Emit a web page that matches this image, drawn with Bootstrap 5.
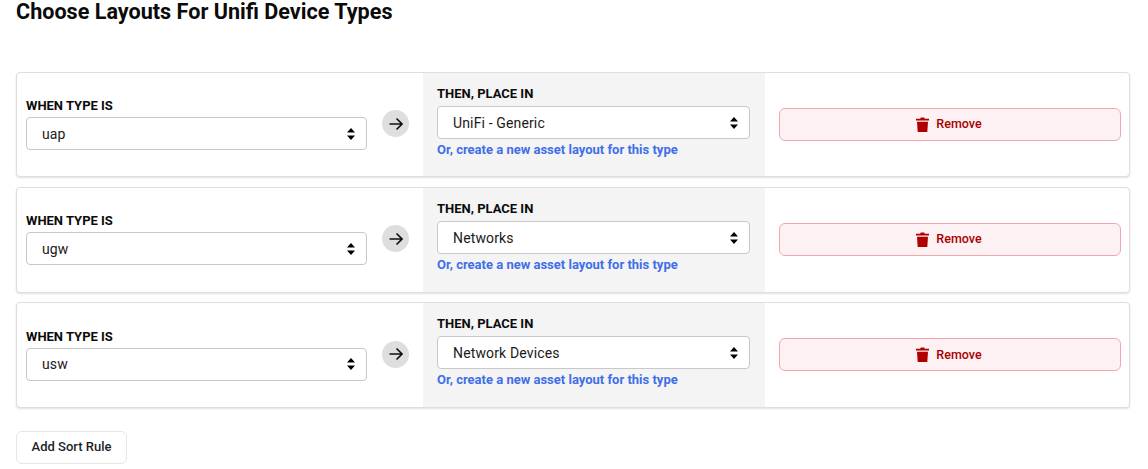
<!DOCTYPE html>
<html lang="en">
<head>
<meta charset="utf-8">
<title>Choose Layouts</title>
<link rel="stylesheet" href="https://cdn.jsdelivr.net/npm/bootstrap@5.3.0/dist/css/bootstrap.min.css">
<style>
body { font-family: Roboto, sans-serif; color: #000; background: #fff; height: 469px; overflow: hidden; padding: 0 16px; }
.page-title { font-size: 21.6px; font-weight: 700; line-height: 24px; margin: 0 0 48px; color: #0b0b0b; }
.rule-list { display: flex; flex-direction: column; gap: 9.8px; width: 1114px; }
.rule-card { height: 105.4px; border: 1px solid #dedede; border-radius: 4px; box-shadow: 0 1px 2px rgba(0,0,0,.12); background: #fff; }
.rule-when { width: 406px; padding: 0 14px 1px 9px; }
.rule-then { width: 342px; background: #f4f4f4; padding: 0 15px 5.4px 14px; }
.rule-action { flex: 1; padding: 0 8px .4px 14px; }
.rule-label { display: block; font-size: 13px; font-weight: 700; line-height: 16px; margin-bottom: 3px; color: #0b0b0b; text-transform: uppercase; }
.rule-then .rule-label { margin-bottom: 4px; }
.rule-select { height: 33px; font-family: Roboto, sans-serif; font-size: 14px; letter-spacing: .14px; line-height: 20px; padding: 0 36px 0 15px; border: 1px solid #c8c8c8; border-radius: 4px; color: #1a1a1a; background-color: #fff; background-image: url("data:image/svg+xml,%3Csvg xmlns='http://www.w3.org/2000/svg' width='10' height='12'%3E%3Cpath d='M5 0l4 4.500H1zM5 12L1 7.500h8z' fill='%23000'/%3E%3C/svg%3E"); background-position: right 10px center; background-size: 10px 12px; background-repeat: no-repeat; }
.arrow-dot { width: 27px; height: 27px; flex: none; border-radius: 50%; background: #dedede; margin-left: 15px; margin-top: -1px; }
.layout-link { display: block; font-size: 13px; font-weight: 700; line-height: 16px; margin-top: 3px; color: #3f6fe8; text-decoration: none; }
.remove-btn { height: 33px; width: 342px; display: flex; align-items: center; justify-content: center; gap: 7px; font-size: 12.5px; font-weight: 500; color: #a80000; background: #fdf1f3; border: 1px solid #f4a6b0; border-radius: 6px; padding: 0 2px 0 0; }
.add-btn { margin-top: 23.2px; height: 33px; width: 111px; padding: 0 0 1px; font-size: 13px; font-weight: 500; color: #1f1f1f; background: #fff; border: 1px solid #e6e6e6; border-radius: 6px; }
</style>
</head>
<body>
<h1 class="page-title">Choose Layouts For Unifi Device Types</h1>
<div class="rule-list">
  <div class="rule-card d-flex">
    <div class="rule-when d-flex align-items-center">
      <div class="flex-grow-1">
        <label class="rule-label">When type is</label>
        <select class="form-select rule-select"><option>uap</option></select>
      </div>
      <div class="arrow-dot d-flex align-items-center justify-content-center"><svg width="14" height="14" viewBox="0 0 14 14" fill="none" stroke="#111" stroke-width="1.600"><path d="M.5 7h12.500M7.500 1.500L13 7l-5.500 5.500"/></svg></div>
    </div>
    <div class="rule-then d-flex flex-column justify-content-center">
      <label class="rule-label">Then, place in</label>
      <select class="form-select rule-select"><option>UniFi - Generic</option></select>
      <a class="layout-link" href="#">Or, create a new asset layout for this type</a>
    </div>
    <div class="rule-action d-flex align-items-center">
      <button class="remove-btn" type="button"><svg width="13" height="15" viewBox="0 0 13 15" fill="#b00000"><path d="M0 1.800h4.200L4.800.5h3.400l.6 1.300H13v1.700H0zM1 4.800h11l-.7 10.200H1.700z"/></svg>Remove</button>
    </div>
  </div>
  <div class="rule-card d-flex">
    <div class="rule-when d-flex align-items-center">
      <div class="flex-grow-1">
        <label class="rule-label">When type is</label>
        <select class="form-select rule-select"><option>ugw</option></select>
      </div>
      <div class="arrow-dot d-flex align-items-center justify-content-center"><svg width="14" height="14" viewBox="0 0 14 14" fill="none" stroke="#111" stroke-width="1.600"><path d="M.5 7h12.500M7.500 1.500L13 7l-5.500 5.500"/></svg></div>
    </div>
    <div class="rule-then d-flex flex-column justify-content-center">
      <label class="rule-label">Then, place in</label>
      <select class="form-select rule-select"><option>Networks</option></select>
      <a class="layout-link" href="#">Or, create a new asset layout for this type</a>
    </div>
    <div class="rule-action d-flex align-items-center">
      <button class="remove-btn" type="button"><svg width="13" height="15" viewBox="0 0 13 15" fill="#b00000"><path d="M0 1.800h4.200L4.800.5h3.400l.6 1.300H13v1.700H0zM1 4.800h11l-.7 10.200H1.700z"/></svg>Remove</button>
    </div>
  </div>
  <div class="rule-card d-flex">
    <div class="rule-when d-flex align-items-center">
      <div class="flex-grow-1">
        <label class="rule-label">When type is</label>
        <select class="form-select rule-select"><option>usw</option></select>
      </div>
      <div class="arrow-dot d-flex align-items-center justify-content-center"><svg width="14" height="14" viewBox="0 0 14 14" fill="none" stroke="#111" stroke-width="1.600"><path d="M.5 7h12.500M7.500 1.500L13 7l-5.500 5.500"/></svg></div>
    </div>
    <div class="rule-then d-flex flex-column justify-content-center">
      <label class="rule-label">Then, place in</label>
      <select class="form-select rule-select"><option>Network Devices</option></select>
      <a class="layout-link" href="#">Or, create a new asset layout for this type</a>
    </div>
    <div class="rule-action d-flex align-items-center">
      <button class="remove-btn" type="button"><svg width="13" height="15" viewBox="0 0 13 15" fill="#b00000"><path d="M0 1.800h4.200L4.800.5h3.400l.6 1.300H13v1.700H0zM1 4.800h11l-.7 10.200H1.700z"/></svg>Remove</button>
    </div>
  </div>
</div>
<button class="add-btn" type="button">Add Sort Rule</button>
<script src="https://cdn.jsdelivr.net/npm/bootstrap@5.3.0/dist/js/bootstrap.bundle.min.js"></script>
</body>
</html>
